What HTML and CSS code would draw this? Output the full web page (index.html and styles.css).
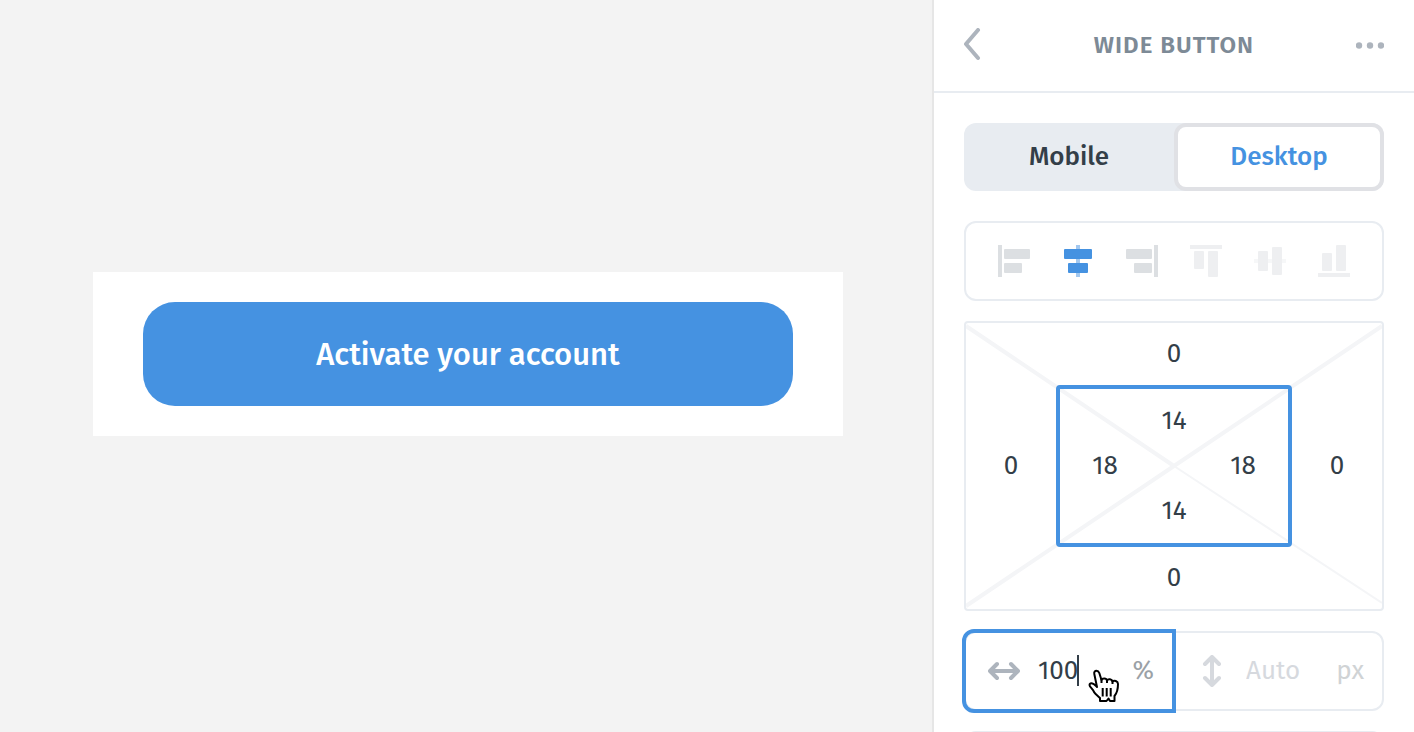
FILE: index.html
```html
<!DOCTYPE html>
<html lang="en">
<head>
<meta charset="utf-8">
<meta name="viewport" content="width=device-width, initial-scale=1">
<title>Wide button</title>
<link rel="stylesheet" href="styles.css">
</head>
<body>
<div class="editor">
  <main class="canvas">
    <div class="sheet">
      <button class="cta" type="button">Activate your account</button>
    </div>
  </main>

  <aside class="panel">
    <header class="panel-header">
      <button class="icon-button" type="button" aria-label="Back">
        <svg width="28" height="34" viewBox="0 0 28 34" fill="none" stroke="#adb4bd" stroke-width="4" stroke-linecap="round" stroke-linejoin="round"><path d="M14 2 2 16 14 30"/></svg>
      </button>
      <h1 class="panel-title">WIDE BUTTON</h1>
      <button class="icon-button" type="button" aria-label="More">
        <svg width="28" height="34" viewBox="0 0 28 34" fill="#adb4bd"><circle cx="3" cy="17.5" r="3.2"/><circle cx="14" cy="17.5" r="3.2"/><circle cx="25" cy="17.5" r="3.2"/></svg>
      </button>
    </header>

    <div class="panel-body">
      <div class="segmented">
        <button class="segment" type="button">Mobile</button>
        <button class="segment segment-active" type="button">Desktop</button>
      </div>

      <div class="controls">
        <div class="box align-row">
          <button class="icon-button" type="button" aria-label="Align left">
            <svg width="32" height="32" fill="#dcdfe2"><path d="M0 0h4v32H0z"/><rect x="6" y="4" width="26" height="10" rx="1"/><rect x="6" y="18" width="18" height="10" rx="1"/></svg>
          </button>
          <button class="icon-button" type="button" aria-label="Align center">
            <svg width="32" height="32" fill="#4592e1"><path fill="#a2c8f0" d="M14 0h4v32h-4z"/><rect x="2" y="4" width="28" height="10" rx="1"/><rect x="6" y="18" width="20" height="10" rx="1"/></svg>
          </button>
          <button class="icon-button" type="button" aria-label="Align right">
            <svg width="32" height="32" fill="#dcdfe2"><path d="M28 0h4v32h-4z"/><rect x="0" y="4" width="26" height="10" rx="1"/><rect x="8" y="18" width="18" height="10" rx="1"/></svg>
          </button>
          <button class="icon-button" type="button" aria-label="Align top">
            <svg width="32" height="32" fill="#eeeff1"><path d="M0 0h32v4H0z"/><rect x="4" y="6" width="10" height="18" rx="1"/><rect x="18" y="6" width="10" height="26" rx="1"/></svg>
          </button>
          <button class="icon-button" type="button" aria-label="Align middle">
            <svg width="32" height="32" fill="#eeeff1"><path fill="#f6f7f8" d="M0 14h32v4H0z"/><rect x="4" y="6" width="10" height="20" rx="1"/><rect x="18" y="2" width="10" height="28" rx="1"/></svg>
          </button>
          <button class="icon-button" type="button" aria-label="Align bottom">
            <svg width="32" height="32" fill="#eeeff1"><path d="M0 28h32v4H0z"/><rect x="4" y="8" width="10" height="18" rx="1"/><rect x="18" y="0" width="10" height="26" rx="1"/></svg>
          </button>
        </div>

        <div class="box spacing">
          <svg class="diagonals" viewBox="0 0 416 286" preserveAspectRatio="none" fill="none" stroke="#f4f5f7" stroke-width="4"><path d="M0 3 208 143 416 3M0 283 208 143"/><path stroke-width="2" d="M208 143 416 280"/></svg>
          <span class="value margin-top">0</span>
          <span class="value margin-left">0</span>
          <div class="padding-box">
            <span class="value pad-top">14</span>
            <span class="value pad-left">18</span>
            <span class="value pad-right">18</span>
            <span class="value pad-bottom">14</span>
          </div>
          <span class="value margin-right">0</span>
          <span class="value margin-bottom">0</span>
        </div>

        <div class="box size-row">
          <div class="field field-focused">
            <svg class="field-icon" width="32" height="32" viewBox="0 0 32 32" fill="none" stroke="#adb4bd" stroke-width="4" stroke-linecap="round" stroke-linejoin="round"><path stroke-linecap="butt" d="M3 16h26"/><path d="M9 9 2 16 9 23M23 9l7 7-7 7"/></svg>
            <input class="field-input" id="width" type="text" value="100" aria-label="Width">
            <label class="unit" for="width">%</label>
            <span class="caret"></span>
            <svg class="pointer" width="32" height="34" viewBox="0 0 32 34" fill="#fff" stroke="#000" stroke-width="2" stroke-linejoin="round" stroke-linecap="round"><path d="M12 32v-3C10 27 7 25 6 23 5 20 1.500 18 1.500 16c0-1.500 1.500-2 3-1.500 2 .5 3 2 4.500 3.500L6.300 5C5.800 3 7 1.700 8.500 1.700S10.800 2.700 11.300 4L13.500 11c.5-2 5-2.300 5.500.5 1-2 5-1.500 5.500 1 1.500-1.500 5.500-.5 5.500 2.500 0 6-1 9-3.500 12v5h-4.500l-1.500-2.500L18.500 32z"/><path fill="none" stroke-linecap="butt" d="M14.700 19v8.500M18.700 19v8.500M22.700 19v8.500M13.500 10v4M19 11v3M24.500 12v3"/></svg>
          </div>
          <div class="field field-muted">
            <svg class="field-icon" width="32" height="32" viewBox="0 0 32 32" fill="none" stroke="#d6d9de" stroke-width="4" stroke-linecap="round" stroke-linejoin="round"><path stroke-linecap="butt" d="M16 3v26"/><path d="M9 9 16 2 23 9M9 23l7 7 7-7"/></svg>
            <input class="field-input" id="height" type="text" placeholder="Auto" aria-label="Height">
            <label class="unit" for="height">px</label>
          </div>
        </div>

        <div class="box next-box"></div>
      </div>
    </div>
  </aside>
</div>
</body>
</html>
```
FILE: styles.css
```css
* { box-sizing: border-box; }

body {
  margin: 0;
  font-family: "Fira Sans", "Noto Sans CJK SC", "Noto Sans", sans-serif;
  font-size: 26px;
  line-height: 32px;
  color: #333e48;
}

button, input { font: inherit; color: inherit; }
svg { display: block; }

.editor {
  display: flex;
  height: 100vh;
  overflow: hidden;
}

.canvas {
  flex: 1;
  display: flex;
  align-items: center;
  justify-content: center;
  padding: 0 0 24px 4px;
  background: #f3f3f3;
}

.sheet {
  width: 750px;
  max-width: 100%;
  padding: 30px 50px;
  background: #fff;
}

.cta {
  display: block;
  width: 100%;
  padding: 29px 36px 27px;
  border: 0;
  border-radius: 32px;
  background: #4592e1;
  color: #fff;
  font-size: 31px;
  font-weight: 500;
  line-height: 48px;
}

.panel {
  flex: none;
  width: 482px;
  border-left: 2px solid #e6e6e6;
  background: #fff;
}

.panel-header {
  display: flex;
  align-items: center;
  justify-content: space-between;
  padding: 28px 30px 29px;
  border-bottom: 2px solid #e8ecf1;
}

.panel-title {
  margin: 0;
  color: #7d8a96;
  font-size: 24px;
  font-weight: 600;
  line-height: 34px;
  letter-spacing: 1px;
}

.icon-button {
  padding: 0;
  border: 0;
  background: none;
}

.panel-body {
  display: grid;
  grid-template-columns: minmax(0, 1fr);
  gap: 30px;
  padding: 30px;
}

.segmented {
  display: grid;
  grid-template-columns: 1fr 1fr;
  border-radius: 12px;
  background: #e8ecf1;
}

.segment {
  padding: 14px;
  border: 4px solid transparent;
  border-radius: 12px;
  background: none;
  font-weight: 500;
}

.segment-active {
  border-color: #e0e1e5;
  background: #fff;
  color: #4592e1;
}

.controls {
  display: grid;
  grid-template-columns: minmax(0, 1fr);
  gap: 20px;
}

.box {
  border: 2px solid #e8ecf1;
  border-radius: 12px;
}

.align-row {
  display: flex;
  justify-content: space-between;
  padding: 22px 32px;
}

.spacing {
  display: grid;
  grid-template: 62px 162px 62px / 90px minmax(0, 1fr) 90px;
  place-items: center;
  border-radius: 4px;
}

.diagonals {
  grid-area: 1 / 1 / -1 / -1;
  width: 100%;
  height: 100%;
}

.margin-top { grid-area: 1 / 2; }
.margin-left { grid-area: 2 / 1; }
.margin-right { grid-area: 2 / 3; }
.margin-bottom { grid-area: 3 / 2; }

.padding-box {
  grid-area: 2 / 2;
  place-self: stretch;
  display: grid;
  grid-template: 1fr 26px 1fr / 90px 1fr 90px;
  place-items: center;
  border: 4px solid #4592e1;
  border-radius: 4px;
}

.pad-top { grid-area: 1 / 2; }
.pad-left { grid-area: 2 / 1; }
.pad-right { grid-area: 2 / 3; }
.pad-bottom { grid-area: 3 / 2; }

.size-row {
  display: grid;
  grid-template-columns: minmax(0, 1fr) minmax(0, 1fr);
}

.field {
  display: flex;
  align-items: center;
  gap: 18px;
  padding: 22px 18px 22px 22px;
}

.field-focused {
  position: relative;
  margin: -4px -2px -4px -4px;
  border: 4px solid #4592e1;
  border-radius: 12px 0 0 12px;
}

.field-icon { flex: none; }

.field-input {
  flex: 1;
  min-width: 0;
  height: 32px;
  padding: 0;
  border: 0;
  outline: 0;
  background: none;
}

.field-input::placeholder { color: #d6d9de; opacity: 1; }

.unit { color: #9ba1a6; }
.field-muted .unit { color: #d0d3d5; }

.caret {
  position: absolute;
  left: 111px;
  top: 22px;
  width: 2px;
  height: 31px;
  background: #333e48;
}

.pointer {
  position: absolute;
  left: 122px;
  top: 36px;
}

.next-box { height: 80px; }
```
